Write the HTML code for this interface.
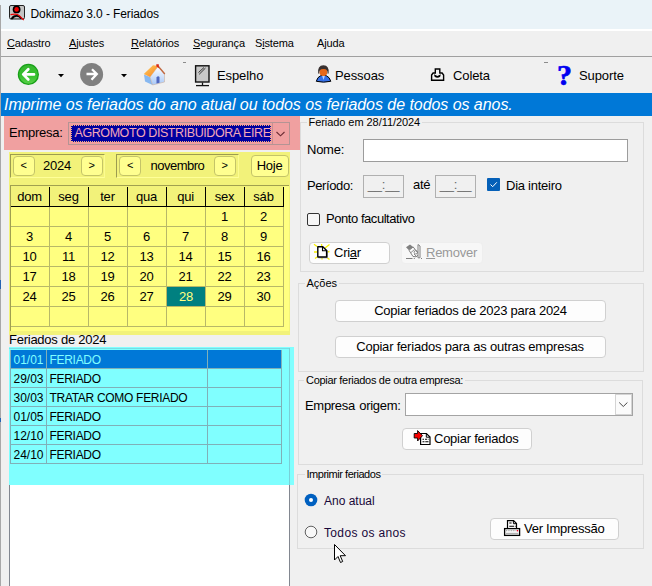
<!DOCTYPE html>
<html><head><meta charset="utf-8"><title>Dokimazo 3.0 - Feriados</title>
<style>
*{box-sizing:border-box;margin:0;padding:0}
html,body{width:652px;height:586px;overflow:hidden;background:#f0f0f0}
body{position:relative;font-family:"Liberation Sans",sans-serif;font-size:13px;color:#000;letter-spacing:-0.25px}
.a{position:absolute;white-space:nowrap}
.t{position:absolute;white-space:nowrap;line-height:16px;height:16px}
u{text-decoration:underline;text-underline-offset:1px}
#title{left:0;top:0;width:652px;height:29px;background:#eaf3f8}
#menu{left:0;top:29px;width:652px;height:27px;background:#f0f0f0}
#menu .t{font-size:11px;top:6px;letter-spacing:-0.15px}
#tb .t{letter-spacing:-0.1px}
#tb{left:0;top:57px;width:652px;height:36px;background:#f0f0f0}
#blue{left:1px;top:93px;width:651px;height:22.500px;background:#0078d7;color:#fff;font-style:italic;font-size:16px;line-height:23px;padding-left:3px;letter-spacing:-0.05px}
.btn{position:absolute;background:#fdfdfd;border:1px solid #d0d0d0;border-radius:4px;text-align:center;line-height:20px;white-space:nowrap}
.gb{position:absolute;border:1px solid #dcdcdc}
.gb>span{position:absolute;left:6px;top:-7px;background:#f0f0f0;padding:0 2px;font-size:11px;line-height:13px;height:13px;white-space:nowrap;letter-spacing:0}

#cal .c{position:absolute;width:39px;height:20px;line-height:22px;text-align:center;letter-spacing:-0.2px}
#cal .hd{position:absolute;left:1px;top:0;width:273px;height:20px;background:#f2f27a}
#cal .sel{background:#008080;color:#ffff80}
#cal i{position:absolute;display:block}
#cal .vg{top:21px;width:1px;height:120px;background:#b8b868}
#cal .hg{left:1px;height:1px;width:273px;background:#b8b868}
#cal .vb{top:1px;width:1px;height:20px;background:#000}
#cal .hb{left:1px;top:20px;height:1px;width:273px;background:#000}
#list .r{position:absolute;left:0;width:272px;height:19px;border-bottom:1px solid #80b0b8;border-left:1px solid #80b0b8;border-right:1px solid #80b0b8;line-height:20px}
#list .r span{position:absolute;top:0;white-space:nowrap}
#list .r span+span{letter-spacing:-0.3px}
#list .sr{background:#0078d7;color:#80ffff}
#list i{position:absolute;top:0;width:1px;height:114px;background:#80b0b8;display:block}
</style></head><body>

<div class="a" style="left:0;top:5px;width:1px;height:581px;background:#a8a8a8;z-index:5"></div>
<div class="a" style="left:0;top:279.5px;width:1px;height:9px;background:#2464b4;z-index:6"></div>
<div class="a" style="left:0;top:417.5px;width:1px;height:4.5px;background:#2464b4;z-index:6"></div>
<!-- title -->
<div id="title" class="a">
<svg class="a" style="left:8px;top:4px" width="18" height="17" viewBox="0 0 18 17"><rect x="1.500" y="1.500" width="15" height="13.5" rx="1.500" fill="#c4c4c4" stroke="#222" stroke-width="1"/><circle cx="8.600" cy="5.400" r="3.900" fill="#000"/><circle cx="8.600" cy="5.400" r="2.300" fill="#f00000"/><path d="M2.500 15.3Q4 11 8.600 11Q12.5 11 14.3 14.8L12.5 15Q11 12.8 8.600 12.8Q6 12.8 4.800 15.3Z" fill="#000"/><path d="M2.500 10.7Q9 9.300 11.5 11.8Q14 14.5 15.8 16" stroke="#f00000" stroke-width="1.2" fill="none"/></svg>
<span class="t" style="left:30.5px;top:6px;font-size:12px;letter-spacing:-0.1px">Dokimazo 3.0 - Feriados</span>
</div>

<!-- menu -->
<div id="menu" class="a">
<span class="t" style="left:7px"><u>C</u>adastro</span>
<span class="t" style="left:69px"><u>A</u>justes</span>
<span class="t" style="left:131px"><u>R</u>elatórios</span>
<span class="t" style="left:193px"><u>S</u>egurança</span>
<span class="t" style="left:255px">S<u>i</u>stema</span>
<span class="t" style="left:317px">A<u>j</u>uda</span>
</div>
<div class="a" style="left:0;top:56px;width:652px;height:1px;background:#a0a0a0"></div>
<div class="a" style="left:0;top:57px;width:652px;height:1px;background:#fcfcfc"></div>
<div class="a" style="left:0;top:90px;width:652px;height:1.500px;background:#fafafa"></div>
<div class="a" style="left:0;top:91.5px;width:652px;height:1.500px;background:#a0a0a0"></div>
<div class="a" style="left:0;top:29px;width:652px;height:1.500px;background:#fff"></div>

<!-- toolbar -->
<div id="tb" class="a">
<span class="t" style="left:217px;top:11px">Espelho</span>
<span class="t" style="left:335px;top:11px">Pessoas</span>
<span class="t" style="left:453px;top:11px">Coleta</span>
<span class="t" style="left:579px;top:11px">Suporte</span>
</div>

<div id="blue" class="a">Imprime os feriados do ano atual ou todos os feriados de todos os anos.</div>

<!-- toolbar icons -->
<svg class="a" style="left:17px;top:63px" width="23" height="23" viewBox="0 0 23 23"><defs><linearGradient id="gg" x1="0" y1="0" x2="0" y2="1"><stop offset="0" stop-color="#38b830"/><stop offset="0.55" stop-color="#34c02c"/><stop offset="1" stop-color="#58d048"/></linearGradient></defs><circle cx="11.4" cy="11.4" r="10.6" fill="#18a018"/><circle cx="11.4" cy="11.4" r="9.3" fill="url(#gg)"/><path d="M17 11.4H7M11.3 6.300L6.200 11.4L11.3 16.5" stroke="#fff" stroke-width="2.7" fill="none" stroke-linecap="round" stroke-linejoin="round"/></svg>
<svg class="a" style="left:57.5px;top:74px" width="7" height="4"><path d="M0 0H6L3 3.300Z" fill="#000"/></svg>
<svg class="a" style="left:80px;top:63px" width="24" height="24" viewBox="0 0 24 24"><circle cx="11.6" cy="11.5" r="11.5" fill="#808080"/><path d="M6.500 11H16.5M12 6.300L16.8 11L11.5 16.8" stroke="#fff" stroke-width="2.3" fill="none" stroke-linecap="butt" stroke-linejoin="miter"/></svg>
<svg class="a" style="left:120.5px;top:74px" width="7" height="4"><path d="M0 0H6L3 3.300Z" fill="#000"/></svg>
<svg class="a" style="left:143px;top:63px" width="23" height="23" viewBox="0 0 23 23"><defs><linearGradient id="rf" x1="0" y1="0" x2="1" y2="1"><stop offset="0" stop-color="#ffd060"/><stop offset="1" stop-color="#f88020"/></linearGradient><linearGradient id="wl" x1="0" y1="0" x2="0" y2="1"><stop offset="0" stop-color="#ffffff"/><stop offset="1" stop-color="#a8c8f8"/></linearGradient></defs><path d="M1 11.5L7 14L9.500 22L2 18.5Z" fill="#88b8f0"/><path d="M7 14L15 3.500L21.5 11V19L9.500 22Z" fill="url(#wl)" stroke="#c8a890" stroke-width="0.5"/><path d="M0.800 11L10 2.300L15.3 3L7 14Z" fill="url(#rf)"/><path d="M15 3L21.8 11" stroke="#c06840" stroke-width="1.4"/><path d="M13.3 1.300H15.8V5.200L13.3 3.200Z" fill="#d82818"/><path d="M13.5 14.5Q15 12.5 16.5 14V19.8L13.5 20.5Z" fill="#5068c0"/></svg>
<div class="a" style="left:182.5px;top:62px;width:3.5px;height:1px;background:#8c8c8c"></div>
<svg class="a" style="left:194px;top:64px" width="17" height="23" viewBox="0 0 17 23"><rect x="1.600" y="1.800" width="13.4" height="16.2" fill="#c8c8c8" stroke="#111" stroke-width="1.4"/><path d="M4.500 8.500L10 3.500M5.200 10.3L11.5 4" stroke="#111" stroke-width="0.8"/><path d="M8.500 18.5V21" stroke="#111" stroke-width="1.3"/><path d="M2 21.6H15" stroke="#111" stroke-width="1.3"/></svg>
<svg class="a" style="left:315px;top:64px" width="18" height="19" viewBox="0 0 18 19"><path d="M1.300 17.3Q2.500 13 5.500 11.8L8.500 11L11.5 11.8Q14.5 13 15.8 17.3Q8.500 19 1.300 17.3Z" fill="#3470e8" stroke="#000" stroke-width="1"/><path d="M7 11.5L8.500 16L10 11.5Z" fill="#b8d4ff"/><circle cx="8.400" cy="8" r="3.900" fill="#e86818"/><path d="M3.200 9.500Q2.200 1.500 8.400 1.300Q14.6 1.500 13.6 9.500L12.6 9.800Q13 4.800 8.400 5Q3.800 4.800 4.200 9.800Z" fill="#383030"/></svg>
<svg class="a" style="left:430px;top:67px" width="16" height="15" viewBox="0 0 16 15"><path d="M1.600 8L3.100 6H5.300V2H9.800V6H12.1L13.6 8V13.2H1.600Z" fill="#f4f4f4" stroke="#000" stroke-width="1.4" stroke-linejoin="miter"/><path d="M4 7.300L7.400 9.100L10.8 7.300L10.2 9.700Q7.400 12 4.600 9.700Z" fill="#000"/></svg>
<div class="a" style="left:544px;top:62px;width:4px;height:1px;background:#8c8c8c"></div>
<span class="a" style="left:557px;top:58px;font:bold 30px/34px 'Liberation Serif',serif;color:#0000f0;letter-spacing:0;-webkit-text-stroke:0.7px #0000f0">?</span>

<!-- left panel -->
<div class="a" style="left:4px;top:116px;width:296px;height:34px;background:#f0a0a0"></div>
<span class="t" style="left:9px;top:125px">Empresa:</span>
<div class="a" style="left:68px;top:122px;width:221.5px;height:23px;background:#f0a0a0;border:1px solid #b49494"></div>
<div class="a" style="left:71px;top:125px;width:200px;height:17px;background:#0000a0;outline:1px dotted #f0b080;outline-offset:-1px;color:#f4a8b8;line-height:17px;padding-left:3.500px;overflow:hidden;font-size:12.500px;letter-spacing:-0.42px">AGROMOTO DISTRIBUIDORA EIRE</div>
<div class="a" style="left:272px;top:123px;width:17px;height:21px;border-left:1px solid #c89090"></div>
<svg class="a" style="left:275px;top:130px" width="11" height="8"><path d="M1.500 2L5.500 5.800L9.500 2" stroke="#6a2c34" stroke-width="1.1" fill="none"/></svg>

<div class="a" style="left:9px;top:151.5px;width:280.5px;height:183px;background:#f2f27a"></div>
<div class="a" style="left:10px;top:185px;width:278.500px;height:145.500px;background:#ffff80;border-top:1px solid #a0a050;border-left:1px solid #a0a050"></div>
<div class="a" style="left:9.500px;top:153.500px;width:95px;height:24px;border-top:1px solid #9c9c50;border-left:1px solid #9c9c50;border-bottom:1px solid #ffff98;border-right:1px solid #fcfc90"></div>
<div class="a" style="left:116px;top:153.500px;width:122.500px;height:24px;border-top:1px solid #9c9c50;border-left:1px solid #9c9c50;border-bottom:1px solid #ffff98;border-right:1px solid #fcfc90"></div>
<div class="btn" style="left:12.500px;top:156px;width:22px;height:20px;background:#ffff90;border-color:#c4c468;font-size:11px;line-height:17px">&lt;</div>
<span class="t" style="left:43px;top:158px">2024</span>
<div class="btn" style="left:80.500px;top:156px;width:22px;height:20px;background:#ffff90;border-color:#c4c468;font-size:11px;line-height:17px">&gt;</div>
<div class="btn" style="left:119px;top:156px;width:22px;height:20px;background:#ffff90;border-color:#c4c468;font-size:11px;line-height:17px">&lt;</div>
<span class="t" style="left:150.5px;top:158px;letter-spacing:-0.5px">novembro</span>
<div class="btn" style="left:213.500px;top:156px;width:22px;height:20px;background:#ffff90;border-color:#c4c468;font-size:11px;line-height:17px">&gt;</div>
<div class="btn" style="left:250.500px;top:154.500px;width:38px;height:22px;background:#ffff90;border-color:#c4c468;line-height:20px">Hoje</div>
<div id="cal" class="a" style="left:10px;top:186px;width:274px;height:141px">
<b class="hd"></b>
<span class="c" style="left:0px;top:0">dom</span>
<span class="c" style="left:39px;top:0">seg</span>
<span class="c" style="left:78px;top:0">ter</span>
<span class="c" style="left:117px;top:0">qua</span>
<span class="c" style="left:156px;top:0">qui</span>
<span class="c" style="left:195px;top:0">sex</span>
<span class="c" style="left:234px;top:0">sáb</span>
<i class="vb" style="left:39px"></i>
<i class="vb" style="left:78px"></i>
<i class="vb" style="left:117px"></i>
<i class="vb" style="left:156px"></i>
<i class="vb" style="left:195px"></i>
<i class="vb" style="left:234px"></i>
<i class="vb" style="left:273px"></i>
<i class="hb"></i>
<i class="vg" style="left:39px"></i>
<i class="vg" style="left:78px"></i>
<i class="vg" style="left:117px"></i>
<i class="vg" style="left:156px"></i>
<i class="vg" style="left:195px"></i>
<i class="vg" style="left:234px"></i>
<i class="vg" style="left:273px"></i>
<i class="hg" style="top:40px"></i>
<i class="hg" style="top:60px"></i>
<i class="hg" style="top:80px"></i>
<i class="hg" style="top:100px"></i>
<i class="hg" style="top:120px"></i>
<i class="hg" style="top:140px"></i>
<span class="c" style="left:195px;top:20px">1</span>
<span class="c" style="left:234px;top:20px">2</span>
<span class="c" style="left:0px;top:40px">3</span>
<span class="c" style="left:39px;top:40px">4</span>
<span class="c" style="left:78px;top:40px">5</span>
<span class="c" style="left:117px;top:40px">6</span>
<span class="c" style="left:156px;top:40px">7</span>
<span class="c" style="left:195px;top:40px">8</span>
<span class="c" style="left:234px;top:40px">9</span>
<span class="c" style="left:0px;top:60px">10</span>
<span class="c" style="left:39px;top:60px">11</span>
<span class="c" style="left:78px;top:60px">12</span>
<span class="c" style="left:117px;top:60px">13</span>
<span class="c" style="left:156px;top:60px">14</span>
<span class="c" style="left:195px;top:60px">15</span>
<span class="c" style="left:234px;top:60px">16</span>
<span class="c" style="left:0px;top:80px">17</span>
<span class="c" style="left:39px;top:80px">18</span>
<span class="c" style="left:78px;top:80px">19</span>
<span class="c" style="left:117px;top:80px">20</span>
<span class="c" style="left:156px;top:80px">21</span>
<span class="c" style="left:195px;top:80px">22</span>
<span class="c" style="left:234px;top:80px">23</span>
<span class="c" style="left:0px;top:100px">24</span>
<span class="c" style="left:39px;top:100px">25</span>
<span class="c" style="left:78px;top:100px">26</span>
<span class="c" style="left:117px;top:100px">27</span>
<span class="c sel" style="left:157px;top:101px;width:38px;height:19px;line-height:20px">28</span>
<span class="c" style="left:195px;top:100px">29</span>
<span class="c" style="left:234px;top:100px">30</span>
</div>

<span class="t" style="left:9px;top:332px">Feriados de 2024</span>
<div class="a" style="left:9px;top:347px;width:281px;height:245px;background:#fff;border:1px solid #828790"></div>
<div class="a" style="left:9px;top:347px;width:284.5px;height:137.5px;background:#80ffff"></div>
<div class="a" style="left:9px;top:348px;width:281px;height:1px;background:#78dce4"></div>
<div class="a" style="left:289px;top:348px;width:1px;height:137px;background:#78d0d8"></div>
<div id="list" class="a" style="left:10px;top:350px;font-size:12px;letter-spacing:0;width:272px;height:115px">
<div class="r sr" style="top:0px"><span style="left:2.5px">01/01</span><span style="left:38.5px">FERIADO</span></div>
<div class="r" style="top:19px"><span style="left:2.5px">29/03</span><span style="left:38.5px">FERIADO</span></div>
<div class="r" style="top:38px"><span style="left:2.5px">30/03</span><span style="left:38.5px">TRATAR COMO FERIADO</span></div>
<div class="r" style="top:57px"><span style="left:2.5px">01/05</span><span style="left:38.5px">FERIADO</span></div>
<div class="r" style="top:76px"><span style="left:2.5px">12/10</span><span style="left:38.5px">FERIADO</span></div>
<div class="r" style="top:95px"><span style="left:2.5px">24/10</span><span style="left:38.5px">FERIADO</span></div>
<i class="lv" style="left:36px"></i>
<i class="lv" style="left:197px"></i>
</div>

<!-- right panel -->
<div class="gb" style="left:300px;top:122px;width:344px;height:149.500px"><span style="left:5.500px;letter-spacing:-0.06px">Feriado em 28/11/2024</span></div>
<span class="t" style="left:307px;top:142px">Nome:</span>
<div class="a" style="left:363px;top:139px;width:265px;height:23px;background:#fff;border:1px solid #9c9c9c"></div>
<span class="t" style="left:307px;top:177.500px;letter-spacing:-0.4px">Período:</span>
<div class="a" style="left:363px;top:175px;width:41px;height:23px;border:1px solid #b0b0b0;color:#686868;text-align:center;line-height:18px">__:__</div>
<span class="t" style="left:413px;top:177px">até</span>
<div class="a" style="left:435px;top:175px;width:41px;height:23px;border:1px solid #b0b0b0;color:#686868;text-align:center;line-height:18px">__:__</div>
<svg class="a" style="left:487px;top:178px" width="13" height="13"><rect width="13" height="13" rx="1" fill="#0560b8"/><path d="M3.500 6.500L5.700 8.700L9.800 4.300" stroke="#fff" stroke-width="1" fill="none"/></svg>
<span class="t" style="left:506px;top:178px">Dia inteiro</span>
<div class="a" style="left:307px;top:212.500px;width:13px;height:13px;border:1px solid #333;background:#f6f6f6;border-radius:2px"></div>
<span class="t" style="left:326px;top:211px;letter-spacing:-0.45px">Ponto facultativo</span>
<div class="btn" style="left:309px;top:241.5px;width:81px;height:22px"></div>
<svg class="a" style="left:313px;top:243px" width="18" height="18" viewBox="0 0 18 18"><path d="M1 1.200L4 3.500M8.500 1L8.800 3M12 5L16.5 1.500M1 9H4M14 9L16.5 8.500M2 15.5L4 14M9 15V16.5M14 14.5L16.5 16.5" stroke="#f8f000" stroke-width="1.3"/><path d="M5.500 14.8H14.5V7.500" stroke="#909090" stroke-width="1" fill="none"/><path d="M4.800 3.800H9.800L13.6 7.500V14H4.800Z" fill="#fff" stroke="#000" stroke-width="1.4" stroke-linejoin="round"/><path d="M9.500 4V7.800H13.3" fill="none" stroke="#000" stroke-width="1.1"/></svg>
<span class="t" style="left:334px;top:245px">Cri<u>a</u>r</span>
<div class="btn" style="left:400.5px;top:241.5px;width:82px;height:22px;background:#f7f7f7;border-color:#eeeeee"></div>
<svg class="a" style="left:405px;top:243px" width="18" height="17" viewBox="0 0 18 17"><path d="M1 4.200L5 1.500L8.200 4L4 7.300Z" fill="#808080"/><path d="M4 7.300L8.200 4L14 11.5Q11 15 8 13.5Z" fill="#fbfbfb" stroke="#808080" stroke-width="1"/><path d="M6 9.500L9.500 6.500M9 11L12 14" stroke="#808080" stroke-width="0.9"/><circle cx="10.8" cy="9.300" r="1.700" fill="none" stroke="#808080" stroke-width="0.9"/><path d="M13 1.500V14.8H15V3Z" fill="#fbfbfb" stroke="#808080" stroke-width="1"/><path d="M1 15.5H7.500M8.800 15.5H9.800M16 15.5H17" stroke="#808080" stroke-width="1"/></svg>
<span class="t" style="left:426px;top:245px;color:#999"><u>R</u>emover</span>

<div class="gb" style="left:298px;top:282.500px;width:346px;height:89.500px"><span style="left:5.5px">Ações</span></div>
<div class="btn" style="left:335px;top:299.500px;width:271px;height:22px">Copiar feriados de 2023 para 2024</div>
<div class="btn" style="left:335px;top:335.500px;width:271px;height:22px;letter-spacing:-0.205px;text-indent:-1px">Copiar feriados para as outras empresas</div>

<div class="gb" style="left:297.5px;top:380px;width:345.5px;height:84.5px"><span style="left:5.500px;letter-spacing:-0.3px">Copiar feriados de outra empresa:</span></div>
<span class="t" style="left:305px;top:398px;word-spacing:1px;letter-spacing:-0.3px">Empresa origem:</span>
<div class="a" style="left:405px;top:393px;width:228px;height:23px;background:#fff;border:1px solid #a4a4a4"></div>
<div class="a" style="left:615px;top:394px;width:17px;height:21px;border:1px solid #d4d4d4;background:#fbfbfb"></div>
<svg class="a" style="left:618px;top:400.5px" width="11" height="8"><path d="M1.200 1.500L5.300 5.500L9.400 1.500" stroke="#484848" stroke-width="1" fill="none"/></svg>
<div class="btn" style="left:402px;top:427.5px;width:129.5px;height:22px"></div>
<svg class="a" style="left:413px;top:429px" width="18" height="17" viewBox="0 0 18 17"><path d="M7.600 4.500H13.4L17 8V15.5H7.600Z" fill="#fff" stroke="#000" stroke-width="1.2" stroke-linejoin="miter"/><path d="M13.3 4.700V8.200H16.8" fill="none" stroke="#000" stroke-width="1"/><path d="M9.500 10.3H11M12 10.3H14M14.8 10.3H15.5M9.500 12.8H11.5M12.3 12.8H15.5" stroke="#000" stroke-width="1.1"/><path d="M1.200 4.500H4.600V1.600L9.500 6.700L4.600 12V9H1.200Z" fill="#f80000" stroke="#000" stroke-width="0.9"/></svg>
<span class="t" style="left:434px;top:431px">Copiar feriados</span>

<div class="gb" style="left:297px;top:474px;width:347px;height:75px"><span style="left:6.500px;letter-spacing:-0.47px">Imprimir feriados</span></div>
<svg class="a" style="left:304px;top:493px" width="14" height="14"><circle cx="7" cy="7" r="6.300" fill="#0060c0"/><circle cx="7" cy="7" r="2" fill="#fff"/></svg>
<span class="t" style="left:324px;top:493px;font-size:12px;letter-spacing:0;color:#18083a">Ano atual</span>
<svg class="a" style="left:304px;top:525px" width="14" height="14"><circle cx="7" cy="7" r="5.800" fill="#f8f8f8" stroke="#505050" stroke-width="0.9"/></svg>
<span class="t" style="left:324px;top:525px;font-size:12px;letter-spacing:0.35px;color:#18083a">Todos os anos</span>
<div class="btn" style="left:490px;top:517.5px;width:128.5px;height:22px"></div>
<svg class="a" style="left:503px;top:519px" width="18" height="18" viewBox="0 0 18 18"><path d="M4.500 9.500V1.600H10.6L13.5 4.500V9.500Z" fill="#fff" stroke="#000" stroke-width="1.2"/><path d="M10.4 1.800V4.700H13.3" fill="none" stroke="#000" stroke-width="1"/><path d="M6.300 4H8.600M6.300 7.300H11M11.8 7.300H12.6" stroke="#000" stroke-width="1.1"/><rect x="1.600" y="9.600" width="15" height="6.800" fill="#fff" stroke="#000" stroke-width="1.3"/><path d="M3 11.7H13.5" stroke="#a8a8a8" stroke-width="1.3" stroke-dasharray="1 0.7"/><rect x="13.8" y="11" width="1.400" height="1.400" fill="#f00020"/><rect x="2.800" y="13.8" width="12.6" height="1.500" fill="#b0b0b0"/></svg>
<span class="t" style="left:524px;top:521px">Ver Impressão</span>
<svg class="a" style="left:334px;top:544px" width="13" height="20" viewBox="0 0 13 20"><path d="M0.500 0.500V16L4 12.500L6.500 18.500L8.700 17.500L6.200 11.700H11.500Z" fill="#fff" stroke="#000" stroke-width="1"/></svg>

</body></html>
